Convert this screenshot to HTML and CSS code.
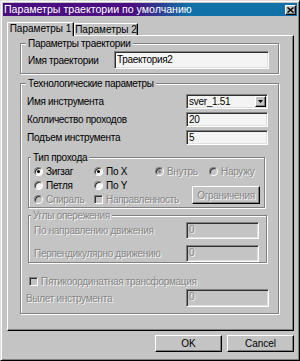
FILE: index.html
```html
<!DOCTYPE html>
<html lang="ru">
  <head>
    <meta charset="UTF-8">
    <meta name="viewport" content="width=device-width, initial-scale=1.0">
    <title>Параметры траектории по умолчанию</title>
    <link rel="stylesheet" href="styles.css">
  </head>
  <body>
    <div class="window">
      <div class="titlebar">
        <span class="title">Параметры траектории по умолчанию</span>
        <span class="close">
          <svg width="7" height="6" viewBox="0 0 7 6"><path d="M0.5 0.5l6 5M6.5 0.5l-6 5" stroke="#000" stroke-width="1.5"/></svg>
        </span>
      </div>

      <div class="tabs">
        <div class="tab active">Параметры 1</div>
        <div class="tab">Параметры 2</div>
      </div>

      <div class="panel">
        <div class="group g-traj">
          <div class="legend">Параметры траектории</div>
          <div class="traj-row">
            <span>Имя траектории</span>
            <div class="edit traj-name">Траектория2</div>
          </div>
        </div>

        <div class="group g-tech">
          <div class="legend">Технологические параметры</div>
          <div class="form">
            <span>Имя инструмента</span>
            <div class="edit combo">
              <span>sver_1.51</span>
              <span class="arrow">
                <svg width="5" height="3" viewBox="0 0 5 3"><path d="M0 0h5L2.5 3z" fill="#000"/></svg>
              </span>
            </div>
            <span>Колличество проходов</span>
            <div class="edit">20</div>
            <span>Подъем инструмента</span>
            <div class="edit">5</div>
          </div>

          <div class="group g-type">
            <div class="legend">Тип прохода</div>
            <div class="options">
              <div class="opt"><span class="radio checked"></span>Зигзаг</div>
              <div class="opt"><span class="radio checked"></span>По X</div>
              <div class="opt off"><span class="radio checked"></span>Внутрь</div>
              <div class="opt off"><span class="radio"></span>Наружу</div>
              <div class="opt"><span class="radio"></span>Петля</div>
              <div class="opt"><span class="radio"></span>По Y</div>
              <button class="btn limits" disabled>Ограничения</button>
              <div class="opt off"><span class="radio"></span>Спираль</div>
              <div class="opt off"><span class="check"></span>Направленность</div>
            </div>
          </div>

          <div class="group g-angles off">
            <div class="legend">Углы опережения</div>
            <div class="angle-row">
              <span>По направлению движения</span>
              <div class="edit">0</div>
            </div>
            <div class="angle-row">
              <span>Перпендикулярно движению</span>
              <div class="edit">0</div>
            </div>
          </div>

          <div class="opt off five-axis"><span class="check"></span>Пятикоординатная трансформация</div>
          <div class="reach-row off">
            <span>Вылет инструмента</span>
            <div class="edit">0</div>
          </div>
        </div>
      </div>

      <div class="buttons">
        <button class="btn">OK</button>
        <button class="btn">Cancel</button>
      </div>
    </div>
  </body>
</html>
```

FILE: styles.css
```css
body {
  margin: 0;
  font-family: "Liberation Sans", Arial, sans-serif;
  font-size: 10px;
  letter-spacing: -0.3px;
  color: #000;
  background-color: #c4c4c4;
  white-space: nowrap;
}

.window {
  width: 300px;
  height: 361px;
  box-sizing: border-box;
  background-color: #c4c4c4;
  border: 1px solid;
  border-color: #dfdfdf #000 #000 #dfdfdf;
  box-shadow: inset 1px 1px #fff, inset -1px -1px #808080;
  padding: 2px 2px 0 2px;
}

/* title bar */
.titlebar {
  height: 13px;
  display: flex;
  align-items: center;
  justify-content: space-between;
  padding: 0 1px 0 1px;
  background: linear-gradient(90deg, #4a0e80 0%, #4a0e80 44%, #1070a8 63%, #1070a8 100%);
  color: #fff;
  font-size: 10.6px;
  letter-spacing: 0;
  line-height: 13px;
}

.close {
  width: 11px;
  height: 10px;
  box-sizing: border-box;
  display: flex;
  align-items: center;
  justify-content: center;
  background-color: #c4c4c4;
  border: 1px solid;
  border-color: #fff #000 #000 #fff;
  box-shadow: inset -1px -1px #808080;
}

/* tabs */
.tabs {
  display: flex;
  align-items: flex-end;
  height: 13px;
  margin-top: 6px;
  padding-left: 4px;
}

.tab {
  height: 12px;
  box-sizing: border-box;
  width: 64px;
  text-align: center;
  line-height: 11px;
  letter-spacing: 0;
  border-top: 1px solid #fff;
  border-left: 1px solid #fff;
  border-right: 1px solid #000;
  box-shadow: inset -1px 0 #808080;
  background-color: #c4c4c4;
}

.tab.active {
  position: relative;
  z-index: 1;
  width: 67px;
  height: 14px;
  margin-bottom: -1px;
  line-height: 12px;
}

.panel {
  height: 296px;
  box-sizing: border-box;
  margin: 0 3px 0 4px;
  border: 1px solid;
  border-color: #fff #000 #000 #fff;
  box-shadow: inset -1px -1px #808080;
  padding: 7px 0 0 12px;
}

/* group boxes */
.group {
  box-sizing: border-box;
  border: 1px solid #808080;
  box-shadow: inset 1px 1px #fff, 1px 1px #fff;
}

.legend {
  display: table;
  margin: -7px 0 0 5px;
  padding: 0 2px;
  line-height: 13px;
  background-color: #c4c4c4;
}

.g-traj {
  width: 259px;
  padding-bottom: 4px;
}

.traj-row {
  display: flex;
  align-items: center;
  margin-top: 1px;
  padding-left: 7px;
}

.traj-row span {
  width: 86px;
}

.edit {
  box-sizing: border-box;
  height: 15px;
  padding-left: 2px;
  line-height: 13px;
  background-color: #f4f4f4;
  border: 1px solid;
  border-color: #808080 #fff #fff #808080;
  box-shadow: inset 1px 1px #303030, inset -1px -1px #dfdfdf;
  overflow: hidden;
}

.edit.traj-name {
  width: 155px;
  height: 18px;
  line-height: 15px;
}

.g-tech {
  width: 259px;
  margin-top: 9px;
  padding: 0 0 6px 0;
}

.form {
  display: grid;
  grid-template-columns: 159px 82px;
  row-gap: 3px;
  align-items: center;
  margin-top: 4px;
  padding-left: 6px;
}

.combo {
  display: flex;
  align-items: center;
  justify-content: space-between;
  padding-right: 1px;
}

.arrow {
  width: 11px;
  height: 11px;
  box-sizing: border-box;
  display: flex;
  align-items: center;
  justify-content: center;
  background-color: #c4c4c4;
  border: 1px solid;
  border-color: #fff #000 #000 #fff;
  box-shadow: inset -1px -1px #808080;
}

.g-type {
  width: 237px;
  margin: 12px 0 0 7px;
  padding-bottom: 1px;
}

.g-type .legend,
.g-angles .legend {
  margin-left: 2px;
}

.options {
  display: grid;
  grid-template-columns: 60px 61px 54px auto;
  grid-auto-rows: 14px;
  padding-left: 5px;
}

.opt {
  display: flex;
  align-items: center;
  gap: 3px;
}

.radio,
.check {
  width: 9px;
  height: 9px;
  flex: none;
  box-sizing: border-box;
  display: flex;
  align-items: center;
  justify-content: center;
  background-color: #f4f4f4;
  border: 1px solid;
  border-color: #808080 #fff #fff #808080;
  box-shadow: inset 1px 1px #303030;
}

.radio {
  border-radius: 50%;
}

.radio.checked::after {
  content: "";
  width: 3px;
  height: 3px;
  border-radius: 50%;
  background-color: #000;
}

.off {
  color: #868686;
  text-shadow: 1px 1px 0 #f4f4f4;
}

.off .radio,
.off .check,
.off .edit {
  background-color: #c4c4c4;
}

.off .radio.checked::after {
  background-color: #808080;
}

.btn {
  box-sizing: border-box;
  width: 67px;
  height: 17px;
  padding: 0;
  font: inherit;
  letter-spacing: 0;
  color: #000;
  background-color: #c4c4c4;
  border: 1px solid;
  border-color: #fff #000 #000 #fff;
  box-shadow: inset -1px -1px #808080;
}

.btn.limits {
  grid-column: 3 / 5;
  grid-row: 2 / 4;
  justify-self: end;
  align-self: start;
  width: 68px;
  height: 18px;
  margin: 8px 4px 0 0;
  letter-spacing: -0.3px;
  color: #868686;
  text-shadow: 1px 1px 0 #f4f4f4;
}

.g-angles {
  width: 239px;
  margin: 7px 0 0 7px;
}

.angle-row {
  display: flex;
  align-items: center;
  padding-left: 5px;
}

.angle-row + .angle-row {
  margin-top: 6px;
}

.angle-row span {
  width: 152px;
}

.angle-row .edit {
  width: 73px;
  height: 17px;
}

.five-axis {
  height: 13px;
  margin: 12px 0 0 8px;
}

.reach-row {
  display: flex;
  align-items: center;
  margin-top: 1px;
  padding-left: 5px;
}

.reach-row span {
  width: 160px;
}

.reach-row .edit {
  width: 83px;
  height: 18px;
}

.buttons {
  display: flex;
  justify-content: flex-end;
  gap: 5px;
  margin: 4px 3px 0 0;
}
```
